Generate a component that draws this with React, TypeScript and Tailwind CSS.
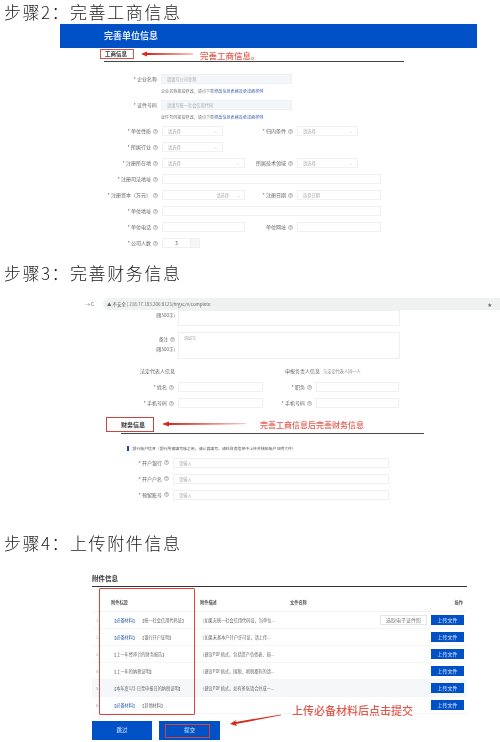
import React from "react";

const cjk = { fontFamily: '"Noto Sans CJK SC", "Liberation Sans", sans-serif' };

function Heading({ step, text }: { step: string; text: string }) {
  return (
    <div className="h-[24px] pt-[1px] pl-[4px] flex items-baseline text-[17px] leading-[22px] font-light text-[#1c1c1c] whitespace-nowrap">
      <span className="tracking-[1.5px] w-[66px]">{step}</span>
      <span className="tracking-[1.6px]">{text}</span>
    </div>
  );
}

function Q() {
  return (
    <svg width="5" height="5" viewBox="0 0 10 10" className="shrink-0">
      <circle cx="5" cy="5" r="4" fill="none" stroke="#777" strokeWidth="1" />
      <path d="M3.5 4a1.5 1.5 0 1 1 1.5 1.5V6.5" fill="none" stroke="#777" strokeWidth="1" />
    </svg>
  );
}

function Label({ w, text, q = true }: { w: string; text: string; q?: boolean }) {
  return (
    <div className={`${w} shrink-0 flex items-center justify-end gap-[2px] pr-[4px] text-[5px] text-[#666] whitespace-nowrap`}>
      <span>{text}</span>
      {q && <Q />}
    </div>
  );
}

function Box({ w, text, h = "h-[10px]", caret = false, bg = "bg-white" }: { w: string; text?: string; h?: string; caret?: boolean; bg?: string }) {
  return (
    <div className={`${w} ${h} ${bg} border border-[#eef0f3] flex items-center justify-between px-[5px] text-[4.2px] text-[#aaa] whitespace-nowrap shrink-0`}>
      <span>{text}</span>
      {caret && <span className="text-[4px] text-[#bbb]">⌄</span>}
    </div>
  );
}

function Arrow({ className, width, height, points }: { className: string; width: number; height: number; points: string }) {
  return (
    <svg width={width} height={height} viewBox={`0 0 ${width} ${height}`} className={`absolute ${className}`}>
      <polygon points={points} fill="#d9281e" />
    </svg>
  );
}

function Row({ children, className = "" }: { children: React.ReactNode; className?: string }) {
  return <div className={`flex items-center ${className}`}>{children}</div>;
}

function SectionOne() {
  return (
    <section>
      <Heading step="步骤2：" text="完善工商信息" />
      <div className="ml-[60px] w-[417px] h-[24px] bg-[#0050c6] flex items-center pl-[44px] text-[9px] font-bold text-[#e8eefb]">完善单位信息</div>
      <div className="relative ml-[104px] w-[300px] h-[14px] border-b border-[#444]">
        <div className="absolute left-[-4px] top-[1px] w-[34px] h-[10px] border border-[#d9534f] flex items-center pl-[4px] text-[5.5px] font-bold text-[#333]">工商信息</div>
        <Arrow className="left-[37px] top-[3px]" width={52} height={6} points="0,3 6,0.5 6,2 52,2.7 52,3.3 6,4 6,5.5" />
        <div className="absolute left-[96px] top-[1px] text-[8.5px] leading-[12px] font-medium text-[#e2574c] whitespace-nowrap">完善工商信息。</div>
      </div>
      <div className="mt-[12px] flex flex-col">
        <Row>
          <Label w="w-[161px]" text="* 企业名称" q={false} />
          <Box w="w-[131px]" bg="bg-[#f4f7fa]" text="请填写公司全称" />
        </Row>
        <div className="ml-[161px] mt-[1px] h-[12px] flex items-center text-[4.1px] text-[#777] whitespace-nowrap">企业名称报错修改，请点下载 <span className="text-[#3f66a8]">修改信息表格及承诺函样例</span></div>
        <Row className="mt-[3px]">
          <Label w="w-[161px]" text="* 证件号码" q={false} />
          <Box w="w-[131px]" bg="bg-[#f4f7fa]" text="请填写统一社会信用代码" />
        </Row>
        <div className="ml-[161px] mt-[1px] h-[12px] flex items-center text-[4.1px] text-[#777] whitespace-nowrap">证件号码报错修改，请点下载 <span className="text-[#3f66a8]">修改信息表格及承诺函样例</span></div>
        <div className="mt-[3px] flex flex-col gap-[6px]">
          <Row>
            <Label w="w-[162px]" text="* 单位性质" />
            <Box w="w-[61px]" text="请选择" caret />
            <Label w="w-[74px]" text="* 归内条件" />
            <Box w="w-[61px]" text="请选择" caret />
          </Row>
          <Row>
            <Label w="w-[162px]" text="* 所属行业" />
            <Box w="w-[61px]" text="请选择" caret />
          </Row>
          <Row>
            <Label w="w-[162px]" text="* 注册所在地" />
            <Box w="w-[83px]" text="请选择" caret />
            <Label w="w-[52px]" text="所属技术领域" />
            <Box w="w-[61px]" text="请选择" caret />
          </Row>
          <Row>
            <Label w="w-[162px]" text="* 注册司法地址" />
            <Box w="w-[219px]" />
          </Row>
          <Row>
            <Label w="w-[162px]" text="* 注册资本（万元）" />
            <div className="w-[83px] h-[10px] border border-[#eef0f3] flex items-center justify-end gap-[8px] pr-[4px] text-[4.2px] text-[#aaa] shrink-0">
              <span>请选择</span>
              <span>⌄</span>
            </div>
            <Label w="w-[52px]" text="* 注册日期" />
            <Box w="w-[84px]" text="选择日期" />
          </Row>
          <Row>
            <Label w="w-[162px]" text="* 单位地址" />
            <Box w="w-[219px]" />
          </Row>
          <Row>
            <Label w="w-[162px]" text="* 单位电话" />
            <Box w="w-[83px]" />
            <Label w="w-[52px]" text="单位网址" />
            <Box w="w-[84px]" />
          </Row>
          <Row>
            <Label w="w-[162px]" text="* 公司人数" />
            <div className="w-[38px] h-[10px] border border-[#eef0f3] flex items-center text-[5px] text-[#555]">
              <span className="flex-1 text-center">3</span>
              <span className="w-[9px] h-full bg-[#f5f6f7] border-l border-[#eef0f3]" />
            </div>
          </Row>
        </div>
      </div>
    </section>
  );
}

function SectionTwo() {
  return (
    <section className="mt-[13px]">
      <Heading step="步骤3：" text="完善财务信息" />
      <div className="mt-[13px] ml-[84px] h-[12px] flex items-center text-[4.5px] text-[#666] whitespace-nowrap">
        <span className="w-[19px] pl-[1px] text-[5px]">→ C</span>
        <div className="flex-1 h-full bg-[#eef3f1] rounded-l-[6px] flex items-center justify-between pl-[4px] pr-[8px]">
          <span>▲ 不安全 | 218.77.183.206:8123/hrgsc/#/complete</span>
          <span>★</span>
        </div>
      </div>
      <div className="flex flex-col">
        <Row className="items-start">
          <div className="w-[178px] pt-[2px] pr-[3px] text-right text-[4.5px] text-[#666]">(限500字)</div>
          <Box w="w-[222px]" h="h-[16px]" />
        </Row>
        <Row className="items-start mt-[6px]">
          <div className="w-[178px] pr-[3px] pt-[2px] text-right text-[4.5px] leading-[10px] text-[#666]">
            <div className="flex items-center justify-end gap-[2px]">备注 <Q /></div>
            <div>(限500字)</div>
          </div>
          <div className="w-[222px] h-[27px] border border-[#eef0f3] px-[5px] py-[2px] text-[4px] text-[#aaa]">请填写</div>
        </Row>
        <Row className="mt-[7px] h-[10px]">
          <div className="w-[178px] pr-[3px] text-right text-[5px] text-[#666]">法定代表人信息</div>
          <div className="w-[142px] text-right text-[5px] text-[#666]">申报负责人信息</div>
          <div className="ml-[3px] text-[4.2px] text-[#888] whitespace-nowrap">与法定代表人同一人</div>
        </Row>
        <Row className="mt-[6px]">
          <Label w="w-[178px]" text="* 姓名" />
          <Box w="w-[85px]" />
          <Label w="w-[53px]" text="* 职务" />
          <Box w="w-[83px]" />
        </Row>
        <Row className="mt-[6px]">
          <Label w="w-[178px]" text="* 手机号码" />
          <Box w="w-[85px]" />
          <Label w="w-[53px]" text="* 手机号码" />
          <Box w="w-[83px]" />
        </Row>
      </div>
      <div className="relative mt-[9px] ml-[121px] w-[303px] h-[17px] border-b border-[#444]">
        <div className="absolute left-[-15px] top-0 w-[48px] h-[15px] bg-white border border-[#c9463e] flex items-center pl-[14px] text-[6px] font-bold text-[#333]">财务信息</div>
        <Arrow className="left-[41px] top-[4px]" width={84} height={6} points="0,3 7,0.5 7,2 84,2.7 84,3.1 7,4 7,5.5" />
        <div className="absolute left-[139px] top-[2px] text-[8px] leading-[12px] font-medium text-[#e2574c] whitespace-nowrap">完善工商信息后完善财务信息</div>
      </div>
      <div className="mt-[12px] ml-[127px] flex items-center text-[3.9px] text-[#555] whitespace-nowrap">
        <span className="w-[1.5px] h-[5px] bg-[#1f46a8] mr-[4px]" />
        <span>银行账户信息（银行所需填写账之用，请认真填写，请在财务信息中上传并核验账户证明文件）</span>
      </div>
      <div className="mt-[6px] flex flex-col gap-[6px]">
        <Row><Label w="w-[173px]" text="* 开户银行" /><Box w="w-[216px]" text="请输入" /></Row>
        <Row><Label w="w-[173px]" text="* 开户户名" /><Box w="w-[216px]" text="请输入" /></Row>
        <Row><Label w="w-[173px]" text="* 预留账号" /><Box w="w-[216px]" text="请输入" /></Row>
      </div>
    </section>
  );
}

const rows = [
  { n: "1", req: true, t: "【统一社会信用代码证】", d: "(如果无统一社会信用代码证，当单位...", choose: true },
  { n: "2", req: true, t: "【银行开户证明】", d: "(如果未基本户开户许可证，请上传..." },
  { n: "3", req: false, t: "【上一年经审计的财务报告】", d: "(建议PDF格式，包括资产负债表、损..." },
  { n: "4", req: false, t: "【上一年的纳税证明】", d: "(建议PDF格式，国税、地税都有的请..." },
  { n: "5", req: false, t: "【本年度1月-日至申报日的纳税证明】", d: "(建议PDF格式，如有多张请合并成一...", shade: true },
  { n: "6", req: true, t: "【其他材料】", d: "" },
];

function SectionThree() {
  return (
    <section className="mt-[31px]">
      <Heading step="步骤4：" text="上传附件信息" />
      <div className="ml-[92px] w-[375px] mt-[15px]">
        <div className="h-[17px] border-b border-[#333] text-[6.5px] font-bold text-[#333] leading-[12px] pt-[2px]">附件信息</div>
        <div className="relative">
          <div className="absolute left-[7px] top-[1px] w-[96px] h-[127px] border-[1.5px] border-[#e0423a] rounded-[1px]" />
          <div className="h-[25px] pt-[7px] flex items-center text-[4.2px] font-bold text-[#555] border-b border-[#f2f3f5]">
            <span className="ml-[19px] w-[89px]">附件标题</span>
            <span className="w-[90px]">附件描述</span>
            <span className="flex-1">文件名称</span>
            <span className="mr-[4px]">操作</span>
          </div>
          {rows.map((r) => (
            <div key={r.n} className={`h-[17px] flex items-center text-[4.2px] text-[#666] border-b border-[#f5f6f7] whitespace-nowrap ${r.shade ? "bg-[#f5f7fa]" : ""}`}>
              <span className="w-[20px] pl-[4px] text-[#aaa]">{r.n}</span>
              <span className="w-[91px]">
                {r.req && <span className="text-[#2a5db0] mr-[5px]">【必备材料】</span>}
                {r.t}
              </span>
              <span className="w-[100px]">{r.d}</span>
              <span className="flex-1" />
              {r.choose && <span className="w-[47px] h-[10px] mr-[4px] border border-[#e6e6e6] flex items-center justify-center text-[5px] text-[#777]">选取电子证件照</span>}
              <span className="w-[33px] h-[10px] mr-[3px] bg-[#0050c6] flex items-center justify-center text-[5px] text-[#dfe8f8]">上传文件</span>
            </div>
          ))}
          <Arrow className="left-[138px] top-[127px]" width={52} height={13} points="0,10 6,6 5.5,8 51,0.5 51,1.3 6,10 7,12" />
          <div className="absolute left-[200px] top-[116px] text-[11px] leading-[14px] font-medium text-[#e2574c] whitespace-nowrap">上传必备材料后点击提交</div>
        </div>
        <div className="mt-[7px] flex gap-[7px]">
          <div className="w-[60px] h-[19px] bg-[#0050c6] flex items-center justify-center text-[5.5px] text-[#dfe8f8]">跳过</div>
          <div className="relative w-[61px] h-[19px] bg-[#0050c6] flex items-center justify-center text-[5.5px] text-[#dfe8f8]">
            提交
            <span className="absolute left-[6px] top-[3px] w-[45px] h-[14px] border border-[#d8423a]" />
          </div>
        </div>
      </div>
    </section>
  );
}

export default function App() {
  return (
    <div style={cjk} className="w-[500px] h-[742px] overflow-hidden bg-white">
      <div className="blur-[0.5px]">
        <SectionOne />
        <SectionTwo />
        <SectionThree />
      </div>
    </div>
  );
}
